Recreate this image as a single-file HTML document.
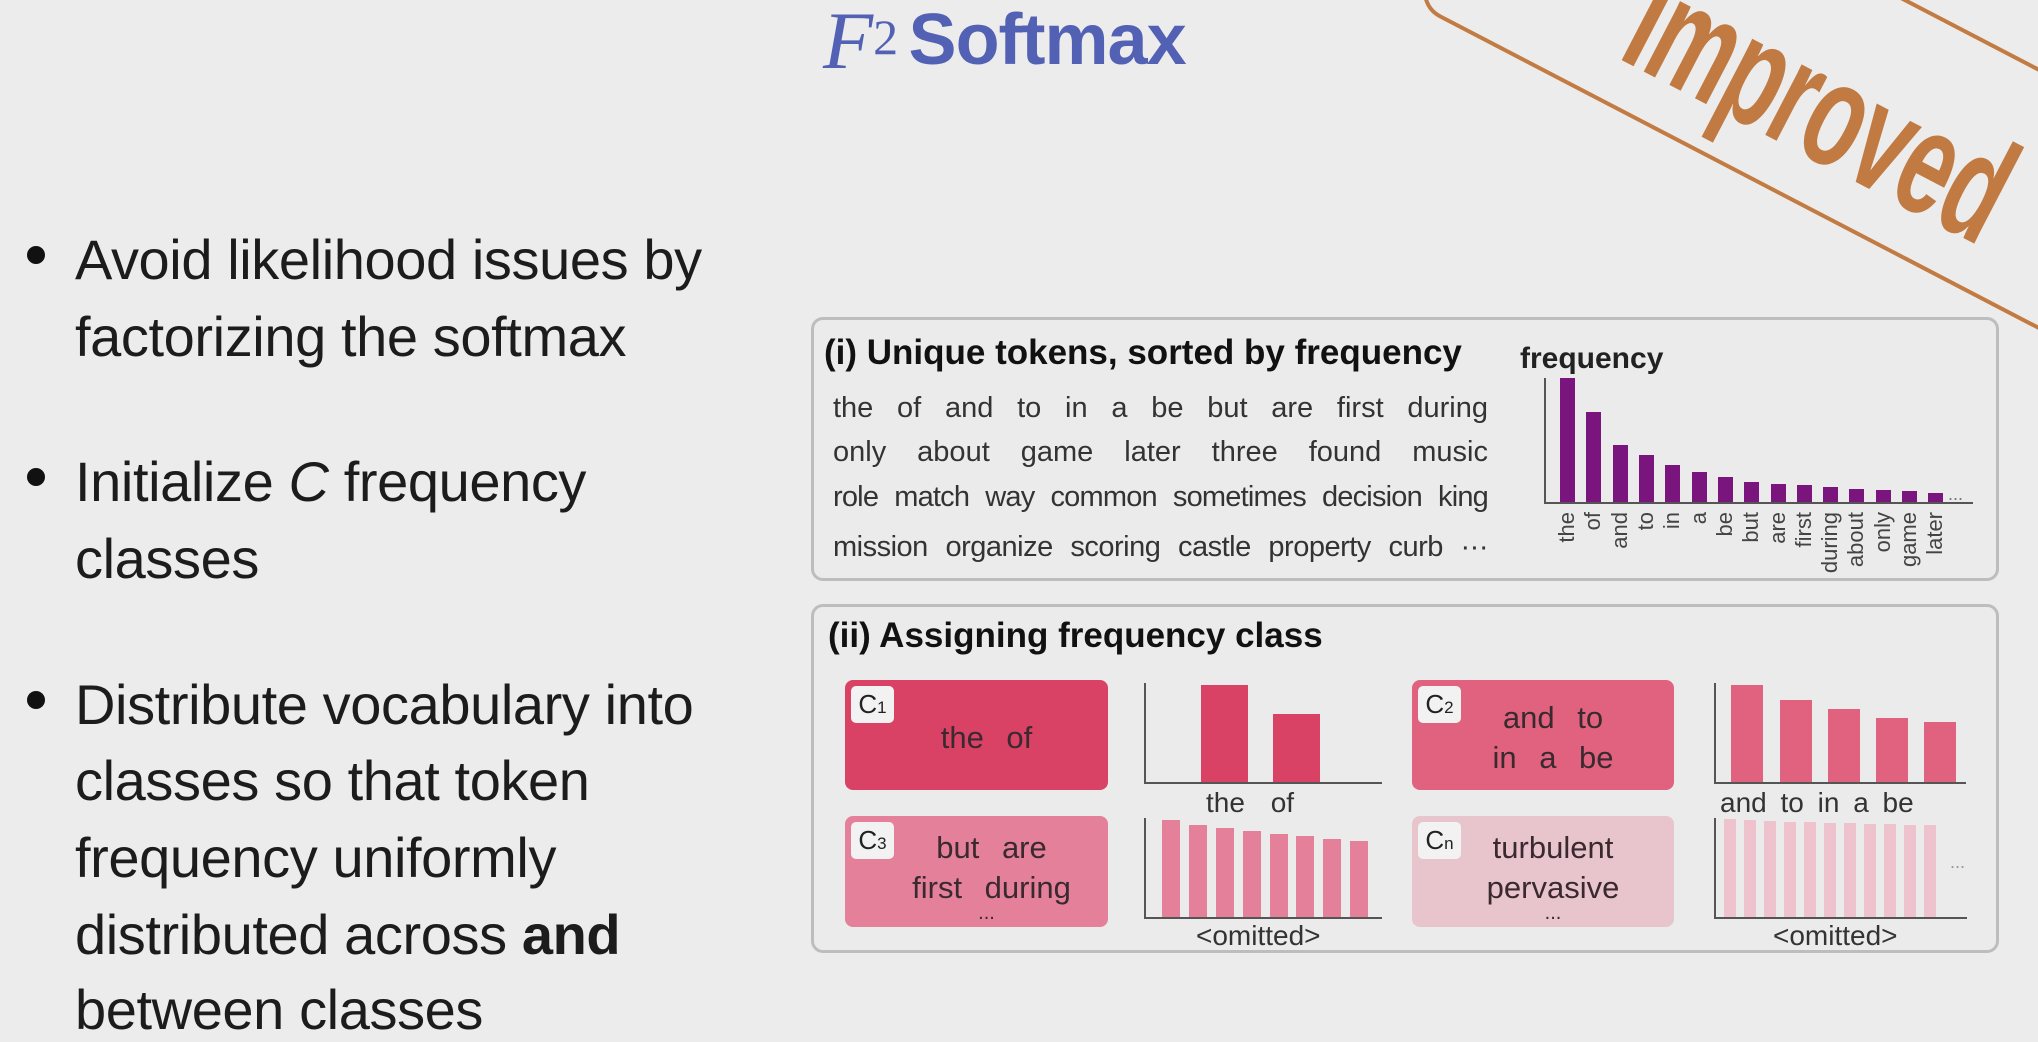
<!DOCTYPE html>
<html><head><meta charset="utf-8"><style>
*{margin:0;padding:0;box-sizing:border-box}
body{width:2038px;height:1042px;background:#ececec;position:relative;overflow:hidden;font-family:"Liberation Sans",sans-serif}
.a{position:absolute;white-space:nowrap}
.bl{font-size:56px;color:#1c1c1c;letter-spacing:-0.4px;line-height:1}
.dot{position:absolute;width:18px;height:18px;border-radius:50%;background:#111}
.box{position:absolute;border:3px solid #bdbdbd;border-radius:12px;background:#ebebeb}
.ttl{font-weight:bold;font-size:35px;color:#111}
.wl{position:absolute;left:833px;width:655px;font-size:29px;color:#333;text-align:justify;text-align-last:justify;white-space:nowrap}
.cb{position:absolute;border-radius:8px;color:#3a2a30;font-size:31px;text-align:center;line-height:40px}
.cl{position:absolute;left:6px;top:6px;width:43px;height:37px;background:#f2f2f2;border-radius:5px;font-size:26px;line-height:37px;color:#222;text-align:center}
.cl sub{font-size:17px;vertical-align:0}
.lb{font-size:28px;color:#333}
</style></head><body>

<div class="a" style="left:823px;top:0px;color:#5361b4;line-height:1">
<span style="font-family:'Liberation Serif',serif;font-style:italic;font-size:82px">F</span><sup style="font-family:'Liberation Serif',serif;font-size:50px;position:relative;top:-8px">2</sup>
<span style="font-weight:bold;font-size:72px;letter-spacing:-1px;margin-left:6px;position:relative;top:-4px">Softmax</span>
</div>

<div style="position:absolute;left:1421px;top:-31px;width:800px;height:233px;border:4px solid #c27b42;border-radius:30px;transform:rotate(27.5deg);display:flex;align-items:center;justify-content:center">
<span style="font-family:'Liberation Sans Narrow','Liberation Sans',sans-serif;font-weight:bold;font-size:150px;color:#c07a42;transform:scaleX(.62);letter-spacing:-2px;position:relative;top:18px;left:10px">Improved</span>
</div>

<div class="dot" style="left:27px;top:246px"></div>
<div class="a bl" style="left:75px;top:232px">Avoid likelihood issues by</div>
<div class="a bl" style="left:75px;top:309px">factorizing the softmax</div>
<div class="dot" style="left:27px;top:468px"></div>
<div class="a bl" style="left:75px;top:454px">Initialize <i>C</i> frequency</div>
<div class="a bl" style="left:75px;top:531px">classes</div>
<div class="dot" style="left:27px;top:691px"></div>
<div class="a bl" style="left:75px;top:677px">Distribute vocabulary into</div>
<div class="a bl" style="left:75px;top:753px">classes so that token</div>
<div class="a bl" style="left:75px;top:830px">frequency uniformly</div>
<div class="a bl" style="left:75px;top:907px">distributed across <b>and</b></div>
<div class="a bl" style="left:75px;top:982px">between classes</div>

<div class="box" style="left:811px;top:317px;width:1188px;height:264px"></div>
<div class="a ttl" style="left:824px;top:333px">(i) Unique tokens, sorted by frequency</div>
<div class="wl" style="top:392px">the of and to in a be but are first during</div>
<div class="wl" style="top:436px">only about game later three found music</div>
<div class="wl" style="top:481px;letter-spacing:-0.8px">role match way common sometimes decision king</div>
<div class="wl" style="top:531px;letter-spacing:-0.5px">mission organize scoring castle property curb ···</div>
<div class="a" style="left:1520px;top:342px;font-weight:bold;font-size:30px;color:#222">frequency</div>

<div class="box" style="left:811px;top:604px;width:1188px;height:349px"></div>
<div class="a ttl" style="left:828px;top:616px">(ii) Assigning frequency class</div>

<div class="cb" style="left:845px;top:680px;width:263px;height:110px;background:#d94165"><div class="cl">C<sub>1</sub></div><div style="padding-top:38px;padding-left:20px;word-spacing:14px">the of</div></div>
<div class="cb" style="left:1412px;top:680px;width:262px;height:110px;background:#e0627e"><div class="cl">C<sub>2</sub></div><div style="padding-top:18px;padding-left:20px;word-spacing:14px">and to<br>in a be</div></div>
<div class="cb" style="left:845px;top:816px;width:263px;height:111px;background:#e4809a"><div class="cl">C<sub>3</sub></div><div style="padding-top:12px;padding-left:30px;word-spacing:14px;line-height:40px">but are<br>first during</div><div style="font-size:20px;line-height:10px;padding-left:20px">...</div></div>
<div class="cb" style="left:1412px;top:816px;width:262px;height:111px;background:#e8c4cc"><div class="cl">C<sub>n</sub></div><div style="padding-top:12px;padding-left:20px;line-height:40px">turbulent<br>pervasive</div><div style="font-size:20px;line-height:10px;padding-left:20px">...</div></div>

<div class="a lb" style="left:1206px;top:787px;word-spacing:18px">the of</div>
<div class="a lb" style="left:1720px;top:787px;word-spacing:6px">and to in a be</div>
<div class="a lb" style="left:1196px;top:920px">&lt;omitted&gt;</div>
<div class="a lb" style="left:1773px;top:920px">&lt;omitted&gt;</div>

<svg class="a" style="left:0;top:0" width="2038" height="1042">
<g fill="#7a157e">
<rect x="1560" y="378" width="15" height="125"/><rect x="1586" y="412" width="15" height="91"/><rect x="1613" y="445" width="15" height="58"/><rect x="1639" y="455" width="15" height="48"/><rect x="1665" y="465" width="15" height="38"/><rect x="1692" y="472" width="15" height="31"/><rect x="1718" y="477" width="15" height="26"/><rect x="1744" y="482" width="15" height="21"/><rect x="1771" y="484" width="15" height="19"/><rect x="1797" y="485" width="15" height="18"/><rect x="1823" y="487" width="15" height="16"/><rect x="1849" y="489" width="15" height="14"/><rect x="1876" y="490" width="15" height="13"/><rect x="1902" y="491" width="15" height="12"/><rect x="1928" y="493" width="15" height="10"/>
</g>
<path d="M1545 378V503H1973" stroke="#555" stroke-width="2" fill="none"/>
<text x="1948" y="500" font-size="18" fill="#777" font-family="Liberation Sans">...</text>
<g font-family="Liberation Sans" font-size="22" fill="#444" text-anchor="end">
<text transform="translate(1574,512) rotate(-90)">the</text><text transform="translate(1600,512) rotate(-90)">of</text><text transform="translate(1627,512) rotate(-90)">and</text><text transform="translate(1653,512) rotate(-90)">to</text><text transform="translate(1679,512) rotate(-90)">in</text><text transform="translate(1706,512) rotate(-90)">a</text><text transform="translate(1732,512) rotate(-90)">be</text><text transform="translate(1758,512) rotate(-90)">but</text><text transform="translate(1785,512) rotate(-90)">are</text><text transform="translate(1811,512) rotate(-90)">first</text><text transform="translate(1837,512) rotate(-90)">during</text><text transform="translate(1863,512) rotate(-90)">about</text><text transform="translate(1890,512) rotate(-90)">only</text><text transform="translate(1916,512) rotate(-90)">game</text><text transform="translate(1942,512) rotate(-90)">later</text>
</g>
<g fill="#d94165"><rect x="1201" y="685" width="47" height="98"/><rect x="1273" y="714" width="47" height="69"/></g>
<path d="M1145 683V783H1382" stroke="#555" stroke-width="2" fill="none"/>
<g fill="#e0627e"><rect x="1731" y="685" width="32" height="98"/><rect x="1780" y="700" width="32" height="83"/><rect x="1828" y="709" width="32" height="74"/><rect x="1876" y="718" width="32" height="65"/><rect x="1924" y="722" width="32" height="61"/></g>
<path d="M1715 683V783H1966" stroke="#555" stroke-width="2" fill="none"/>
<g fill="#e4809a"><rect x="1162" y="820" width="18" height="98"/><rect x="1189" y="825" width="18" height="93"/><rect x="1216" y="828" width="18" height="90"/><rect x="1243" y="831" width="18" height="87"/><rect x="1270" y="834" width="18" height="84"/><rect x="1296" y="836" width="18" height="82"/><rect x="1323" y="839" width="18" height="79"/><rect x="1350" y="841" width="18" height="77"/></g>
<path d="M1145 818V918H1382" stroke="#555" stroke-width="2" fill="none"/>
<g fill="#eec3cd"><rect x="1724" y="819" width="12" height="99"/><rect x="1744" y="820" width="12" height="98"/><rect x="1764" y="821" width="12" height="97"/><rect x="1784" y="822" width="12" height="96"/><rect x="1804" y="822" width="12" height="96"/><rect x="1824" y="823" width="12" height="95"/><rect x="1844" y="823" width="12" height="95"/><rect x="1864" y="824" width="12" height="94"/><rect x="1884" y="824" width="12" height="94"/><rect x="1904" y="825" width="12" height="93"/><rect x="1924" y="825" width="12" height="93"/></g>
<path d="M1715 818V918H1967" stroke="#555" stroke-width="2" fill="none"/>
<text x="1950" y="868" font-size="18" fill="#999" font-family="Liberation Sans">...</text>
</svg>
</body></html>
